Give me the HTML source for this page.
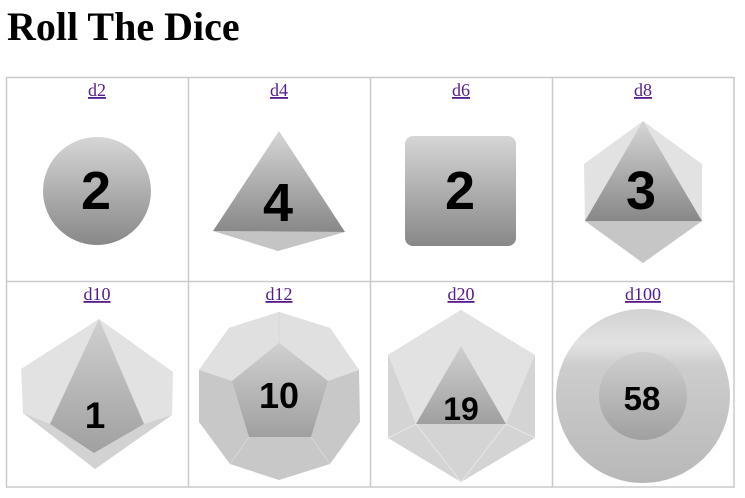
<!DOCTYPE html>
<html><head><meta charset="utf-8"><style>
html,body{margin:0;padding:0;background:#fff;width:745px;height:498px;overflow:hidden}
svg{display:block}
.n{font-family:"Liberation Sans",sans-serif;font-weight:bold;text-anchor:middle;fill:#000}
.l{font-family:"Liberation Serif",serif;font-size:18px;fill:#551a8b;text-anchor:middle;text-decoration:underline}
</style></head><body>
<svg width="745" height="498" viewBox="0 0 745 498" xmlns="http://www.w3.org/2000/svg">
<defs>
<linearGradient id="g" x1="0" y1="0" x2="0" y2="1"><stop offset="0" stop-color="#d6d6d6"/><stop offset="1" stop-color="#888"/></linearGradient>
<linearGradient id="g2" x1="0" y1="0" x2="0" y2="1"><stop offset="0" stop-color="#d0d0d0"/><stop offset="1" stop-color="#a0a0a0"/></linearGradient>
<linearGradient id="g3" x1="0" y1="0" x2="0" y2="1"><stop offset="0" stop-color="#d2d2d2"/><stop offset="0.2" stop-color="#e2e2e2"/><stop offset="0.33" stop-color="#cdcdcd"/><stop offset="1" stop-color="#b8b8b8"/></linearGradient>
</defs>
<text x="7" y="40" font-family="Liberation Serif,serif" font-weight="bold" font-size="40">Roll The Dice</text>
<g stroke="#cacaca" stroke-width="1.5" fill="none">
<rect x="6.5" y="77.5" width="727.5" height="409.5"/>
<line x1="188.5" y1="77" x2="188.5" y2="487"/>
<line x1="370.5" y1="77" x2="370.5" y2="487"/>
<line x1="552.5" y1="77" x2="552.5" y2="487"/>
<line x1="6" y1="281.5" x2="734" y2="281.5"/>
</g>
<text class="l" x="97" y="96">d2</text>
<text class="l" x="279" y="96">d4</text>
<text class="l" x="461" y="96">d6</text>
<text class="l" x="643" y="96">d8</text>
<text class="l" x="97" y="300">d10</text>
<text class="l" x="279" y="300">d12</text>
<text class="l" x="461" y="300">d20</text>
<text class="l" x="643" y="300">d100</text>

<circle cx="97" cy="191" r="54" fill="url(#g)"/>
<text class="n" x="96" y="209" font-size="54">2</text>

<polygon points="213,231 345,232 278,251" fill="#c4c4c4"/>
<polygon points="279,131 213,231 345,232" fill="url(#g)"/>
<text class="n" x="278" y="221" font-size="54">4</text>

<rect x="405" y="136" width="111" height="110" rx="8" fill="url(#g)"/>
<text class="n" x="460" y="209" font-size="54">2</text>

<polygon points="643,121 702,164 702,221 643,263 585,221 584,164" fill="#e2e2e2"/>
<polygon points="585,221 702,221 643,263" fill="#c6c6c6"/>
<polygon points="643,121 585,221 702,221" fill="url(#g)"/>
<text class="n" x="641" y="209" font-size="54">3</text>

<polygon points="99,319 173,372 172,415 95,469 23,413 21,369" fill="#e2e2e2"/>
<polygon points="23,413 50,424 94,453 144,424 172,415 95,469" fill="#d2d2d2"/>
<polygon points="99,319 50,424 94,453 144,424" fill="url(#g2)"/>
<text class="n" x="95" y="428" font-size="37">1</text>

<polygon points="279,312 330,328 359,370 360,422 330,464 279,480 230,464 199,422 199,370 229,328" fill="#c8c8c8"/>
<polygon points="279,312 330,328 359,370 328,381 279,343 232,381 199,370 229,328" fill="#e0e0e0"/>
<g stroke="#d8d8d8" stroke-width="1"><line x1="279" y1="343" x2="279" y2="312"/><line x1="311" y1="437" x2="330" y2="464"/><line x1="249" y1="437" x2="230" y2="464"/></g>
<polygon points="279,343 328,381 311,437 249,437 232,381" fill="url(#g2)"/>
<text class="n" x="279" y="408" font-size="36">10</text>

<polygon points="461,310 535,355 535,438 461,482 388,438 388,355" fill="#d4d4d4"/>
<polygon points="461,310 535,355 506,424 416,424 388,355" fill="#e2e2e2"/>
<g stroke="#e6e6e6" stroke-width="1" fill="none"><polyline points="388,438 416,424 461,482 506,424 535,438"/></g>
<polygon points="461,346 416,424 506,424" fill="url(#g2)"/>
<text class="n" x="461" y="420" font-size="32">19</text>

<circle cx="643" cy="396" r="87" fill="url(#g3)"/>
<circle cx="643" cy="396" r="44" fill="url(#g2)"/>
<text class="n" x="642" y="410" font-size="33">58</text>
</svg>
</body></html>
